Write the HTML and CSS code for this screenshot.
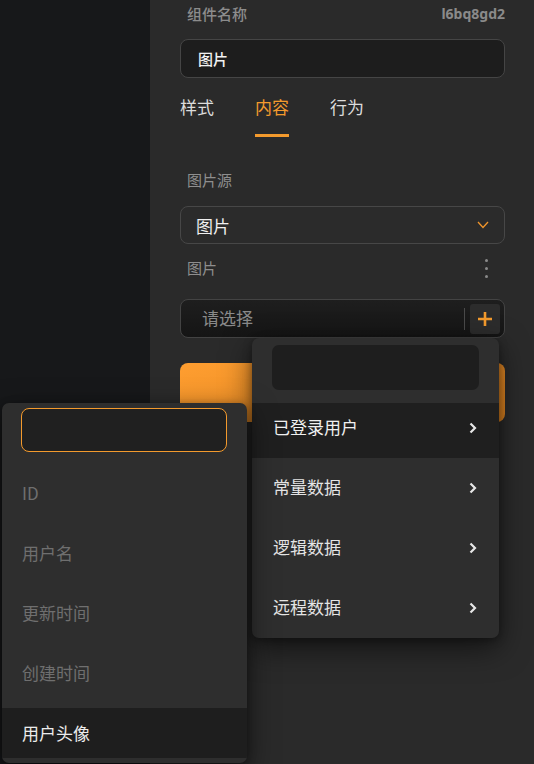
FILE: index.html
```html
<!DOCTYPE html>
<html lang="zh">
<head>
<meta charset="utf-8">
<title>属性面板</title>
<link rel="stylesheet" href="styles.css">
</head>
<body>
<div class="app">
  <aside class="sidebar"></aside>
  <main class="panel">
    <div class="head-row">
      <span class="label">组件名称</span>
      <span class="comp-id">l6bq8gd2</span>
    </div>
    <div class="name-input">图片</div>
    <nav class="tabs">
      <span class="tab">样式</span>
      <span class="tab active">内容</span>
      <span class="tab">行为</span>
    </nav>
    <div class="field-label">图片源</div>
    <div class="select">
      <span>图片</span>
      <svg class="chev-down" width="12" height="8" viewBox="0 0 12 8"><path d="M1 1 L6 6.5 L11 1" fill="none" stroke="#f0952c" stroke-width="1.3"/></svg>
    </div>
    <div class="field-row">
      <span class="field-label flat">图片</span>
      <span class="dots"><i></i><i></i><i></i></span>
    </div>
    <div class="picker">
      <span class="placeholder">请选择</span>
      <span class="divider"></span>
      <span class="plus-btn">
        <svg width="16" height="16" viewBox="0 0 16 16"><path d="M8 1 V15 M1 8 H15" stroke="#f39a2d" stroke-width="2.6"/></svg>
      </span>
    </div>
    <div class="orange-btn"></div>
  </main>

  <div class="menu menu-main">
    <div class="menu-search dark"></div>
    <div class="menu-item current first"><span>已登录用户</span><svg class="chev" width="9" height="12" viewBox="0 0 9 12"><path d="M2.5 1.5 L7 6 L2.5 10.5" fill="none" stroke="#e6e6e6" stroke-width="2.2"/></svg></div>
    <div class="menu-item"><span>常量数据</span><svg class="chev" width="9" height="12" viewBox="0 0 9 12"><path d="M2.5 1.5 L7 6 L2.5 10.5" fill="none" stroke="#e6e6e6" stroke-width="2.2"/></svg></div>
    <div class="menu-item"><span>逻辑数据</span><svg class="chev" width="9" height="12" viewBox="0 0 9 12"><path d="M2.5 1.5 L7 6 L2.5 10.5" fill="none" stroke="#e6e6e6" stroke-width="2.2"/></svg></div>
    <div class="menu-item"><span>远程数据</span><svg class="chev" width="9" height="12" viewBox="0 0 9 12"><path d="M2.5 1.5 L7 6 L2.5 10.5" fill="none" stroke="#e6e6e6" stroke-width="2.2"/></svg></div>
  </div>

  <div class="menu menu-sub">
    <div class="menu-search focus"></div>
    <div class="sub-item">ID</div>
    <div class="sub-item">用户名</div>
    <div class="sub-item">更新时间</div>
    <div class="sub-item">创建时间</div>
    <div class="sub-item selected">用户头像</div>
  </div>
</div>
</body>
</html>
```

FILE: styles.css
```css
* { box-sizing: border-box; }
html, body { margin: 0; padding: 0; }
body {
  width: 534px;
  height: 764px;
  overflow: hidden;
  background: #2a2a2a;
  font-family: "Noto Sans CJK SC", "Noto Sans", sans-serif;
  color: #e6e6e6;
}
.app {
  position: relative;
  display: flex;
  width: 534px;
  height: 764px;
}
.sidebar {
  width: 150px;
  flex: none;
  background: #17181a;
}
.panel {
  flex: 1;
  padding: 0 29px 0 30px;
  display: flex;
  flex-direction: column;
}
.head-row {
  height: 26px;
  display: flex;
  align-items: center;
  justify-content: space-between;
  padding-left: 7px;
}
.label {
  font-size: 15px;
  font-weight: 500;
  color: #8c8c8c;
}
.comp-id {
  font-family: "Noto Sans", sans-serif;
  font-size: 14px;
  font-weight: 700;
  color: #8a8a8a;
}
.name-input {
  margin-top: 13px;
  height: 39px;
  border: 1px solid #454545;
  border-radius: 8px;
  background: #1d1d1d;
  display: flex;
  align-items: center;
  padding-left: 17px;
  font-size: 15px;
  font-weight: 500;
  color: #f2f2f2;
}
.tabs {
  display: flex;
  gap: 41px;
  margin-top: 12px;
}
.tab {
  padding: 5px 0 15px;
  line-height: 24px;
  font-size: 17px;
  color: #dcdcdc;
  border-bottom: 3px solid transparent;
}
.tab.active {
  color: #f39a2d;
  border-bottom-color: #f39a2d;
}
.field-label {
  margin-top: 31px;
  padding-left: 7px;
  line-height: 24px;
  font-size: 15px;
  color: #8e8e8e;
}
.field-label.flat { margin-top: 0; }
.select {
  margin-top: 14px;
  height: 38px;
  border: 1px solid #474747;
  border-radius: 8px;
  background: #2b2b2b;
  display: flex;
  align-items: center;
  justify-content: space-between;
  padding: 0 15px 0 15px;
  font-size: 17px;
  color: #f0f0f0;
}
.chev-down { display: block; }
.field-row {
  margin-top: 12px;
  display: flex;
  justify-content: space-between;
  align-items: center;
}
.dots {
  display: flex;
  flex-direction: column;
  gap: 5px;
  margin-right: 17px;
}
.dots i {
  display: block;
  width: 3px;
  height: 3px;
  border-radius: 50%;
  background: #8a8a8a;
}
.picker {
  margin-top: 19px;
  height: 39px;
  border: 1px solid #434343;
  border-radius: 8px;
  background: linear-gradient(180deg, #1e1e1e, #151515);
  display: flex;
  align-items: center;
  padding: 0 4px 0 21px;
}
.placeholder {
  flex: 1;
  font-size: 17px;
  color: #8a8a8a;
  padding-bottom: 2px;
}
.divider {
  width: 1px;
  height: 22px;
  background: #4a4a4a;
  margin-right: 5px;
}
.plus-btn {
  width: 30px;
  height: 30px;
  border-radius: 3px;
  background: #2c2c2c;
  display: flex;
  align-items: center;
  justify-content: center;
}
.plus-btn svg { display: block; }
.orange-btn {
  margin-top: 25px;
  height: 59px;
  border-radius: 8px;
  background: linear-gradient(160deg, #ff9e30, #d9801f);
}

/* overlay menus */
.menu {
  position: absolute;
  background: #2e2e2e;
  border-radius: 7px;
  box-shadow: 0 10px 30px rgba(0,0,0,0.55), 0 2px 8px rgba(0,0,0,0.35);
  overflow: hidden;
}
.menu-main {
  left: 252px;
  top: 338px;
  width: 247px;
  height: 300px;
  padding-top: 7px;
}
.menu-search {
  border-radius: 7px;
  background: #1e1e1e;
}
.menu-search.dark {
  margin: 0 20px 13px;
  height: 45px;
}
.menu-item {
  height: 60px;
  display: flex;
  align-items: center;
  justify-content: space-between;
  padding: 0 22px 3px 21px;
  font-size: 17px;
  color: #e4e4e4;
}
.menu-item .chev { margin-top: 3px; }
.menu-item.first {
  height: 55px;
  padding-bottom: 8px;
}
.menu-item.current {
  background: #1f1f1f;
  color: #f0f0f0;
}
.chev { display: block; }

.menu-sub {
  left: 2px;
  top: 403px;
  width: 245px;
  height: 360px;
  padding-top: 5px;
  border-radius: 7px;
}
.menu-search.focus {
  margin: 0 20px 11px 19px;
  height: 44px;
  border: 1px solid #f39a2d;
  border-radius: 8px;
  background: #202020;
}
.sub-item {
  height: 60px;
  display: flex;
  align-items: center;
  padding: 0 0 2px 20px;
  font-size: 17px;
  color: #6f6f6f;
}
.sub-item.selected {
  margin-top: 5px;
  height: 50px;
  background: #1e1e1e;
  color: #ececec;
}
```
